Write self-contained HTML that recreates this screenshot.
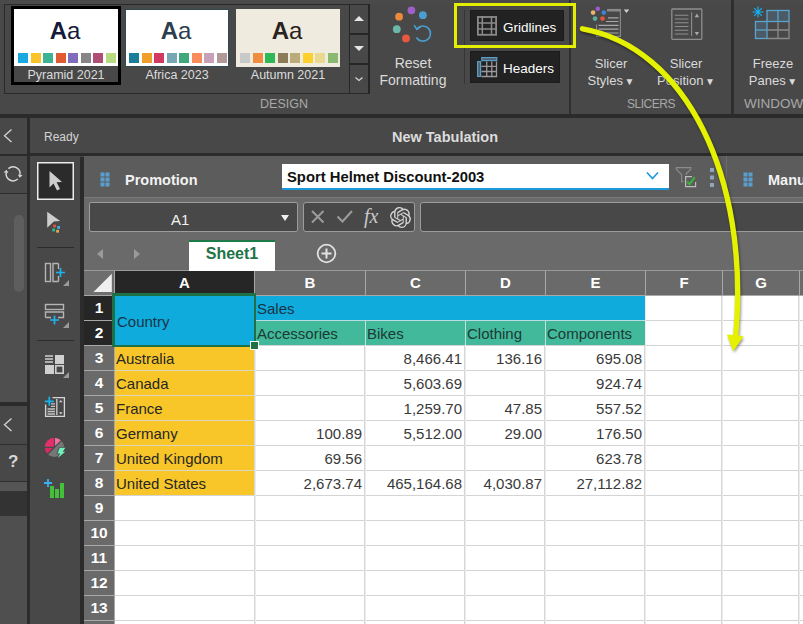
<!DOCTYPE html>
<html><head><meta charset="utf-8">
<style>
*{margin:0;padding:0;box-sizing:border-box}
html,body{width:803px;height:624px;overflow:hidden;background:#484848;font-family:"Liberation Sans",sans-serif;position:relative}
.a{position:absolute}
.lbl{color:#dcdcdc;font-size:12.5px;white-space:nowrap;text-align:center}
.grp{color:#a8a8a8;font-size:13px;white-space:nowrap}
.card{position:absolute;background:#fff}
.aa{position:absolute;left:-2px;right:0;top:10px;text-align:center;font-size:24px;line-height:24px}
.aa b{font-weight:bold}
.sw{position:absolute;top:44px;width:10px;height:10px}
.rib-t{color:#dadada;font-size:13px;white-space:nowrap;text-align:center;line-height:17px;padding-top:1px}
.cell{position:absolute;font-size:15px;line-height:24px;padding-top:1px;white-space:nowrap;color:#262626}
.num{text-align:right}
.rh{position:absolute;left:84px;width:30px;height:24px;color:#fff;font-weight:bold;font-size:15.5px;line-height:24px;text-align:center}
.ch{position:absolute;top:271px;height:24px;color:#fff;font-weight:bold;font-size:15px;line-height:24px;text-align:center}
</style></head><body>
<!-- ============ RIBBON ============ -->
<div class="a" style="left:0;top:0;width:803px;height:4px;background:#4a4a4a"></div>
<!-- design group frame -->
<div class="a" style="left:4px;top:4px;width:365px;height:90px;border:1px solid #2a2a2a"></div>

<!-- card1 selected -->
<div class="a" style="left:11px;top:6px;width:110px;height:79px;border:3px solid #000;background:#484848"></div>
<div class="card" style="left:14px;top:9px;width:104px;height:57px">
 <div class="aa" style="color:#161a3a"><b>A</b>a</div>
 <div class="sw" style="left:4px;background:#1aa8e0"></div>
 <div class="sw" style="left:16.5px;background:#f8c42a"></div>
 <div class="sw" style="left:29px;background:#3fb294"></div>
 <div class="sw" style="left:41.5px;background:#e25a32"></div>
 <div class="sw" style="left:54px;background:#7f6cbc"></div>
 <div class="sw" style="left:66.5px;background:#868686"></div>
 <div class="sw" style="left:79px;background:#b04e76"></div>
 <div class="sw" style="left:91.5px;background:#b8da80"></div>
</div>
<div class="a lbl" style="left:14px;top:67px;width:104px;line-height:16px">Pyramid 2021</div>
<!-- card2 -->
<div class="card" style="left:125px;top:9px;width:104px;height:58px;border:1px solid #2e4a52">
 <div class="aa" style="color:#2c3e4e;top:9px"><b>A</b>a</div>
 <div class="sw" style="left:3px;top:43px;background:#1a7e98"></div>
 <div class="sw" style="left:15.5px;top:43px;background:#f0a02a"></div>
 <div class="sw" style="left:28px;top:43px;background:#d23a62"></div>
 <div class="sw" style="left:40.5px;top:43px;background:#78a8b6"></div>
 <div class="sw" style="left:53px;top:43px;background:#40a87a"></div>
 <div class="sw" style="left:65.5px;top:43px;background:#f98c5a"></div>
 <div class="sw" style="left:78px;top:43px;background:#c8a0b8"></div>
 <div class="sw" style="left:90.5px;top:43px;background:#b09a98"></div>
</div>
<div class="a lbl" style="left:125px;top:67px;width:104px;line-height:16px">Africa 2023</div>
<!-- card3 -->
<div class="card" style="left:236px;top:9px;width:104px;height:58px;background:#efebdf;border:1px solid #efebdf">
 <div class="aa" style="color:#2a221e;top:9px"><b>A</b>a</div>
 <div class="sw" style="left:3px;top:43px;background:#c9c9c9"></div>
 <div class="sw" style="left:15.5px;top:43px;background:#f08c40"></div>
 <div class="sw" style="left:28px;top:43px;background:#2fb858"></div>
 <div class="sw" style="left:40.5px;top:43px;background:#8c7a58"></div>
 <div class="sw" style="left:53px;top:43px;background:#baab78"></div>
 <div class="sw" style="left:65.5px;top:43px;background:#ffd02c"></div>
 <div class="sw" style="left:78px;top:43px;background:#e8d890"></div>
 <div class="sw" style="left:90.5px;top:43px;background:#88ba70"></div>
</div>
<div class="a lbl" style="left:236px;top:67px;width:104px;line-height:16px">Autumn 2021</div>
<!-- scroll buttons -->
<div class="a" style="left:349px;top:4px;width:21px;height:90px;border-left:1px solid #262626;border-right:2px solid #262626"></div>
<div class="a" style="left:349px;top:33px;width:20px;height:2px;background:#262626"></div>
<div class="a" style="left:349px;top:63px;width:20px;height:2px;background:#262626"></div>
<div class="a" style="left:354px;top:16px;width:0;height:0;border-left:5px solid transparent;border-right:5px solid transparent;border-bottom:5px solid #e6e6e6"></div>
<div class="a" style="left:354px;top:46px;width:0;height:0;border-left:5px solid transparent;border-right:5px solid transparent;border-top:5px solid #e6e6e6"></div>
<svg class="a" style="left:354px;top:76px" width="10" height="6"><path d="M1.5 1.5 L5 4.5 L8.5 1.5" fill="none" stroke="#d8d8d8" stroke-width="1.2"/></svg>
<div class="a grp" style="left:244px;top:96px;width:80px;text-align:center;font-size:12.5px;line-height:16px">DESIGN</div>

<!-- reset formatting -->
<svg class="a" style="left:385px;top:0px" width="50" height="50">
 <circle cx="26.4" cy="10.3" r="3.9" fill="#a05ec8"/>
 <circle cx="37.9" cy="15.2" r="3.9" fill="#4a9ed0"/>
 <circle cx="14.1" cy="16.7" r="3.9" fill="#ec8a3c"/>
 <circle cx="11.8" cy="29.2" r="3.9" fill="#6cb8a8"/>
 <circle cx="21" cy="38.4" r="3.9" fill="#e8583e"/>
 <path d="M32.2 28.5 A7.6 7.6 0 1 1 31.4 37.5" fill="none" stroke="#4a9ed0" stroke-width="1.6"/>
 <path d="M29.2 25.2 L31.8 29.4 L35.8 26.6" fill="none" stroke="#4a9ed0" stroke-width="1.6" stroke-linejoin="miter"/>
</svg>
<div class="a rib-t" style="left:363px;top:54px;width:100px;font-size:14px">Reset<br>Formatting</div>
<!-- group separator -->
<div class="a" style="left:464px;top:10px;width:1px;height:74px;background:#353535"></div>
<div class="a" style="left:569px;top:0;width:2px;height:114px;background:#2e2e2e"></div>
<!-- gridlines btn -->
<div class="a" style="left:470px;top:10px;width:94px;height:31px;background:#222;border:1px solid #1c1c1c"></div>
<svg class="a" style="left:470px;top:8px" width="32" height="32">
 <rect x="7.9" y="9" width="18.2" height="17.8" fill="none" stroke="#8a8a8a" stroke-width="1.8"/>
 <path d="M7 15H27M7 21H27" stroke="#8a8a8a" stroke-width="1.7"/>
 <path d="M12.3 8V27M21.5 8V27" stroke="#8a8a8a" stroke-width="1.5"/>
</svg>
<div class="a" style="left:503px;top:19.5px;color:#fff;font-size:13.5px;line-height:16px;white-space:nowrap">Gridlines</div>
<!-- headers btn -->
<div class="a" style="left:470px;top:51px;width:90px;height:32px;background:#222;border:1px solid #1c1c1c"></div>
<svg class="a" style="left:470px;top:50px" width="32" height="32">
 <rect x="11.8" y="7.6" width="15" height="3" fill="#4e6272" stroke="#5a9ec6" stroke-width="1.2"/>
 <rect x="7.6" y="11.6" width="3" height="14.8" fill="#4e6272" stroke="#5a9ec6" stroke-width="1.2"/>
 <path d="M11.5 16.3H26.5M11.5 21.5H26.5M11.5 26.5H27.2M16.7 11.5V27M21.8 11.5V27M26.5 11.5V27" stroke="#9a9a9a" stroke-width="1.3"/>
</svg>
<div class="a" style="left:503px;top:61px;color:#fff;font-size:13.5px;line-height:16px;white-space:nowrap">Headers</div>
<!-- yellow highlight box -->
<div class="a" style="left:454px;top:3px;width:122px;height:45px;border:3.5px solid #e4ee00"></div>
<!-- slicer styles icon -->
<svg class="a" style="left:585px;top:0px" width="50" height="45">
 <circle cx="12.8" cy="8.8" r="2.3" fill="#9b5ccb"/>
 <circle cx="8.1" cy="12.6" r="2.3" fill="#f0b070"/>
 <circle cx="18.8" cy="12.6" r="2.3" fill="#3a86d4"/>
 <circle cx="10" cy="18.6" r="2.3" fill="#5fae9a"/>
 <circle cx="17.5" cy="18.6" r="2.3" fill="#e05636"/>
 <path d="M22 10.2H35.5" stroke="#8a8a8a" stroke-width="2.6"/>
 <path d="M35.4 9V36.4H11.5V24.5" fill="none" stroke="#8a8a8a" stroke-width="1.1"/>
 <path d="M23 17.9H33.5M21 21.5H33.5M13.5 25.4H33.5M13.5 29.2H33.5M13.5 33H33.5" stroke="#a8a8a8" stroke-width="1.2"/>
 <path d="M38.8 9.6H44.2L41.5 13Z" fill="#d0d0d0"/>
</svg>
<div class="a rib-t" style="left:571px;top:54px;width:80px">Slicer<br>Styles <span style="font-size:10px;margin-left:-2px">&#9660;</span></div>
<!-- slicer position icon -->
<svg class="a" style="left:660px;top:0px" width="50" height="50">
 <rect x="11.8" y="9" width="30" height="30.4" rx="0.8" fill="none" stroke="#8e8e8e" stroke-width="1.3"/>
 <path d="M14.8 15.2H28.4M14.8 19H28.4M14.8 22.8H28.4M14.8 26.5H28.4M14.8 30.3H28.4M14.8 34H28.4" stroke="#8e8e8e" stroke-width="1.1"/>
 <path d="M31.6 12.2V36" stroke="#8e8e8e" stroke-width="1.1"/>
 <path d="M34.7 17.2L36.9 13.6L39.1 17.2Z M34.7 32L36.9 35.6L39.1 32Z" fill="#a8a8a8"/>
</svg>
<div class="a rib-t" style="left:646px;top:54px;width:80px">Slicer<br>Position <span style="font-size:10px;margin-left:-2px">&#9660;</span></div>
<div class="a grp" style="left:611px;top:96px;width:80px;text-align:center;font-size:12px;letter-spacing:-0.5px;line-height:16px">SLICERS</div>
<div class="a" style="left:731px;top:0;width:3px;height:114px;background:#2e2e2e"></div>
<!-- freeze panes icon -->
<svg class="a" style="left:752px;top:5px" width="40" height="36">
 <rect x="15" y="5.5" width="22" height="11" fill="#4c5a65" stroke="#5aa4cf" stroke-width="1.3"/>
 <path d="M26 5.5V16.5" stroke="#5aa4cf" stroke-width="1.3"/>
 <rect x="3.5" y="16.5" width="11.5" height="17" fill="#4c5a65" stroke="#5aa4cf" stroke-width="1.3"/>
 <path d="M3.5 25H15" stroke="#5aa4cf" stroke-width="1.3"/>
 <path d="M15 33.5H37V16.5M26 16.5V33.5M15 25H37" fill="none" stroke="#8a8a8a" stroke-width="1.3"/>
 <path d="M6 1.5V12.5M0.5 7H11.5M2.2 3.2L9.8 10.8M9.8 3.2L2.2 10.8" stroke="#14b0f2" stroke-width="1.2"/>
</svg>
<div class="a rib-t" style="left:733px;top:54px;width:80px">Freeze<br>Panes <span style="font-size:10px;margin-left:-2px">&#9660;</span></div>
<div class="a grp" style="left:744px;top:96px;font-size:13.5px;line-height:16px">WINDOW</div>
<!-- dark band -->
<div class="a" style="left:0;top:114px;width:803px;height:4px;background:#2b2b2b"></div>

<!-- ============ TITLE ROW ============ -->
<div class="a" style="left:27px;top:118px;width:3px;height:506px;background:#2b2b2b"></div>
<svg class="a" style="left:2px;top:128px" width="12" height="16"><path d="M9.5 1.5 L2.5 7.8 L9.5 14" fill="none" stroke="#d4d4d4" stroke-width="1.3"/></svg>
<div class="a" style="left:44px;top:129px;color:#d4d4d4;font-size:12px;line-height:16px">Ready</div>
<div class="a" style="left:392px;top:128px;color:#dcdcdc;font-size:14.5px;font-weight:bold;line-height:18px;white-space:nowrap">New Tabulation</div>
<div class="a" style="left:27px;top:153px;width:776px;height:3px;background:#2b2b2b"></div>
<div class="a" style="left:0;top:154px;width:27px;height:2px;background:#2b2b2b"></div>
<!-- left panel -->
<div class="a" style="left:0;top:156px;width:27px;height:37px;background:#484848"></div>
<svg class="a" style="left:0px;top:158px" width="27" height="34">
 <path d="M8.42 10.60 A7.0 7.0 0 0 1 20.03 16.77" fill="none" stroke="#d8d8d8" stroke-width="1.5"/>
 <path d="M19.60 19.86 L22.61 17.14 L17.97 16.48Z" fill="#d8d8d8"/>
 <path d="M17.78 21.00 A7.0 7.0 0 0 1 6.17 14.83" fill="none" stroke="#d8d8d8" stroke-width="1.5"/>
 <path d="M6.60 11.74 L3.59 14.46 L8.23 15.12Z" fill="#d8d8d8"/>
</svg>
<div class="a" style="left:0;top:193px;width:27px;height:1px;background:#2b2b2b"></div>
<div class="a" style="left:0;top:194px;width:27px;height:208px;background:#4f4f4f"></div>
<div class="a" style="left:14px;top:215px;width:10px;height:77px;background:#5e5e5e;border-radius:5px"></div>
<div class="a" style="left:0;top:402px;width:27px;height:4px;background:#2b2b2b"></div>
<div class="a" style="left:0;top:406px;width:27px;height:38px;background:#484848"></div>
<svg class="a" style="left:2px;top:417px" width="12" height="16"><path d="M9.5 1.5 L2.5 7.8 L9.5 14" fill="none" stroke="#d4d4d4" stroke-width="1.3"/></svg>
<div class="a" style="left:0;top:444px;width:27px;height:1px;background:#2e2e2e"></div>
<div class="a" style="left:0;top:445px;width:27px;height:36px;background:#484848"></div>
<div class="a" style="left:8px;top:452px;color:#d8d8d8;font-size:17px;font-weight:bold;line-height:20px">?</div>
<div class="a" style="left:0;top:481px;width:27px;height:1px;background:#2e2e2e"></div>
<div class="a" style="left:0;top:482px;width:27px;height:9px;background:#555"></div>
<div class="a" style="left:0;top:491px;width:27px;height:25px;background:#333"></div>
<div class="a" style="left:0;top:516px;width:27px;height:108px;background:#4f4f4f"></div>
<!-- tool column -->
<div class="a" style="left:80px;top:157px;width:4px;height:467px;background:#2b2b2b"></div>
<svg class="a" style="left:37px;top:162px" width="37" height="38"><rect x="0.75" y="0.75" width="35.5" height="36.5" fill="#2b2b2b" stroke="#ececec" stroke-width="1.5"/></svg>
<svg class="a" style="left:46px;top:169px" width="20" height="26"><path d="M3.5 2 L3.5 18.5 L7.5 14.5 L11 21.5 L14 20 L10.6 13.2 L16 13 Z" fill="#cdcdcd"/></svg>
<svg class="a" style="left:44px;top:209px" width="22" height="24">
 <path d="M3.2 2.8 L16.2 12 L9.8 12.4 L3.2 18.8 Z" fill="#cdcdcd"/>
 <rect x="9.2" y="15.6" width="2.8" height="2.8" fill="#e8503c"/>
 <rect x="13.2" y="17" width="2.8" height="2.8" fill="#3ab0ee"/>
 <rect x="8.2" y="19.6" width="2.8" height="2.8" fill="#22c08a"/>
 <rect x="12.2" y="20.8" width="2.8" height="2.8" fill="#e4a458"/>
</svg>
<div class="a" style="left:37px;top:247px;width:37px;height:1px;background:#2b2b2b"></div>
<svg class="a" style="left:43px;top:261px" width="28" height="26">
 <rect x="2.5" y="2.5" width="5" height="18" fill="none" stroke="#b4b4b4" stroke-width="1.4"/>
 <path d="M15.5 2.5 H10 V20.5 H15.5 M15.5 2.5 V8 M15.5 15 V20.5" fill="none" stroke="#b4b4b4" stroke-width="1.4"/>
 <path d="M17.5 7 V16 M13 11.5 H22" stroke="#1eb4f0" stroke-width="1.7"/>
 <path d="M20 25 L26 19 L26 25Z" fill="#9a9a9a"/>
</svg>
<svg class="a" style="left:43px;top:302px" width="28" height="27">
 <rect x="2.5" y="2.5" width="18" height="5" fill="none" stroke="#b4b4b4" stroke-width="1.4"/>
 <path d="M2.5 15.5 V10 H20.5 V15.5 H15 M2.5 15.5 H8" fill="none" stroke="#b4b4b4" stroke-width="1.4"/>
 <path d="M11.5 13.5 V22.5 M7 18 H16" stroke="#1eb4f0" stroke-width="1.7"/>
 <path d="M20 26 L26 20 L26 26Z" fill="#9a9a9a"/>
</svg>
<div class="a" style="left:37px;top:340px;width:37px;height:1px;background:#2b2b2b"></div>
<svg class="a" style="left:43px;top:353px" width="28" height="27">
 <path d="M2 3H10M2 6H10M2 9H10" stroke="#d0d0d0" stroke-width="1.6"/>
 <rect x="12" y="2" width="9" height="9" fill="#d0d0d0"/>
 <rect x="2" y="12" width="9" height="9" fill="#d0d0d0"/>
 <rect x="12.8" y="12.8" width="7.4" height="7.4" fill="none" stroke="#d0d0d0" stroke-width="1.6"/>
 <path d="M20 25 L26 19 L26 25Z" fill="#9a9a9a"/>
</svg>
<svg class="a" style="left:28px;top:380px" width="56" height="45">
 <path d="M24.5 17.6 H36.4 V36.4 H17.6 V24.5" fill="none" stroke="#d6d6d6" stroke-width="1.3"/>
 <path d="M28.8 19 V35" stroke="#b8b8b8" stroke-width="1.6"/>
 <path d="M23 23.8H27M23 26.3H27M19.5 29H27M19.5 31.5H27M19.5 34H27" stroke="#c4c4c4" stroke-width="1.3"/>
 <path d="M31 22.2L32.8 20L34.6 22.2Z M31 32.2L32.8 34.4L34.6 32.2Z" fill="#d0d0d0"/>
 <path d="M21.3 16.8 V25.8 M16.8 21.3 H25.8" stroke="#16b2f2" stroke-width="1.7"/>
</svg>
<svg class="a" style="left:40px;top:432px" width="32" height="30">
 <path d="M14.4 15.4 L4.8 15.4 A9.6 9.6 0 0 1 14.4 5.8 Z" fill="#e2306a"/>
 <path d="M14.4 15.4 L14.4 5.8 A9.6 9.6 0 0 1 21.19 8.61 Z" fill="#ef6fa0"/>
 <path d="M14.4 15.4 L21.19 8.61 A9.6 9.6 0 0 1 7.61 22.19 Z" fill="#767676"/>
 <path d="M14.4 15.4 L7.61 22.19 A9.6 9.6 0 0 1 4.8 15.4 Z" fill="#d82a62"/>
 <path d="M14.4 15.4 V5 M14.4 15.4 H4 M22 7.8 L6.8 23" stroke="#484848" stroke-width="1.1"/>
 <path d="M19.8 15.8 H25.4 L22.6 19.8 H25.2 L17.8 26 L20.2 21.4 H17.4 Z" fill="#72f0bc" stroke="#484848" stroke-width="1.6" stroke-linejoin="round" paint-order="stroke"/>
</svg>
<svg class="a" style="left:44px;top:478px" width="24" height="22">
 <rect x="6" y="8" width="4" height="12" fill="#44c03a"/>
 <rect x="11" y="11" width="4" height="9" fill="#44c03a"/>
 <rect x="16" y="5" width="4" height="15" fill="#44c03a"/>
 <path d="M4 1 V9 M0 5 H8" stroke="#3ab0f0" stroke-width="1.8"/>
</svg>

<!-- ============ MAIN AREA ============ -->
<div class="a" style="left:84px;top:156px;width:719px;height:41px;background:#5c5c5c"></div>
<svg class="a" style="left:100px;top:172px" width="11" height="15">
 <rect x="0.5" y="0.5" width="4" height="4" fill="#5a9ed0"/><rect x="5.5" y="0.5" width="4" height="4" fill="#5a9ed0"/>
 <rect x="0.5" y="5.5" width="4" height="4" fill="#5a9ed0"/><rect x="5.5" y="5.5" width="4" height="4" fill="#5a9ed0"/>
 <rect x="0.5" y="10.5" width="4" height="4" fill="#5a9ed0"/><rect x="5.5" y="10.5" width="4" height="4" fill="#5a9ed0"/>
</svg>
<div class="a" style="left:125px;top:171px;color:#f2f2f2;font-size:14.5px;font-weight:bold;line-height:18px">Promotion</div>
<div class="a" style="left:282px;top:164px;width:387px;height:26px;background:#fff;border-bottom:2px solid #1a9ad8"></div>
<div class="a" style="left:287px;top:168px;color:#111;font-size:14.8px;font-weight:bold;line-height:18px;white-space:nowrap">Sport Helmet Discount-2003</div>
<svg class="a" style="left:646px;top:171px" width="14" height="10"><path d="M1 1.5 L6.5 7.5 L12 1.5" fill="none" stroke="#1a9ad8" stroke-width="1.6"/></svg>
<svg class="a" style="left:670px;top:160px" width="30" height="30">
 <path d="M15.6 14.5 L20.8 9.2 V7.6 H6.3 V9.2 L11.6 14.5 V21.8 H13.6" fill="none" stroke="#8c8c8c" stroke-width="1.1"/>
 <path d="M22 16.6 H15.6 V26.6 H25.6 V22" fill="none" stroke="#bdbdbd" stroke-width="1.2"/>
 <path d="M17.2 21.8 L19.6 24.2 L24.8 17.2" fill="none" stroke="#38b53a" stroke-width="2"/>
</svg>
<svg class="a" style="left:709px;top:167px" width="6" height="21"><rect x="1" y="1" width="4" height="4" fill="#8ea6ba"/><rect x="1" y="8.5" width="4" height="4" fill="#8ea6ba"/><rect x="1" y="16" width="4" height="4" fill="#8ea6ba"/></svg>
<div class="a" style="left:726px;top:156px;width:1px;height:41px;background:#6c6c6c"></div>
<svg class="a" style="left:743px;top:172px" width="11" height="15">
 <rect x="0.5" y="0.5" width="4" height="4" fill="#5a9ed0"/><rect x="5.5" y="0.5" width="4" height="4" fill="#5a9ed0"/>
 <rect x="0.5" y="5.5" width="4" height="4" fill="#5a9ed0"/><rect x="5.5" y="5.5" width="4" height="4" fill="#5a9ed0"/>
 <rect x="0.5" y="10.5" width="4" height="4" fill="#5a9ed0"/><rect x="5.5" y="10.5" width="4" height="4" fill="#5a9ed0"/>
</svg>
<div class="a" style="left:768px;top:171px;color:#f2f2f2;font-size:14.5px;font-weight:bold;line-height:18px">Manu</div>
<!-- formula bar -->
<div class="a" style="left:84px;top:197px;width:719px;height:1px;background:#7a7a7a"></div>
<div class="a" style="left:84px;top:198px;width:719px;height:72px;background:#6a6a6a"></div>
<div class="a" style="left:89px;top:202px;width:209px;height:30px;background:#484848;border:1px solid #9c9c9c;border-radius:2px"></div>
<div class="a" style="left:171px;top:209.5px;color:#f0f0f0;font-size:15px;line-height:20px">A1</div>
<div class="a" style="left:281px;top:215px;width:0;height:0;border-left:4.5px solid transparent;border-right:4.5px solid transparent;border-top:6px solid #f0f0f0"></div>
<div class="a" style="left:303px;top:202px;width:112px;height:30px;background:#484848;border:1px solid #9c9c9c;border-radius:3px"></div>
<svg class="a" style="left:310px;top:209px" width="16" height="16"><path d="M2 2 L13.5 13.5 M13.5 2 L2 13.5" stroke="#9c9c9c" stroke-width="2"/></svg>
<svg class="a" style="left:336px;top:208px" width="18" height="16"><path d="M1.5 8.5 L6.5 13.5 L16 3" fill="none" stroke="#9c9c9c" stroke-width="2"/></svg>
<div class="a" style="left:364px;top:205px;color:#c8c8c8;font-family:'Liberation Serif',serif;font-style:italic;font-size:20px;line-height:22px">fx</div>
<svg class="a" style="left:389.5px;top:206.5px" width="21" height="21" viewBox="0 0 24 24"><path fill="#d4d4d4" d="M22.2819 9.8211a5.9847 5.9847 0 0 0-.5157-4.9108 6.0462 6.0462 0 0 0-6.5098-2.9A6.0651 6.0651 0 0 0 4.9807 4.1818a5.9847 5.9847 0 0 0-3.9977 2.9 6.0462 6.0462 0 0 0 .7427 7.0966 5.98 5.98 0 0 0 .511 4.9107 6.051 6.051 0 0 0 6.5146 2.9001A5.9847 5.9847 0 0 0 13.2599 24a6.0557 6.0557 0 0 0 5.7718-4.2058 5.9894 5.9894 0 0 0 3.9977-2.9001 6.0557 6.0557 0 0 0-.7475-7.0729zm-9.022 12.6081a4.4755 4.4755 0 0 1-2.8764-1.0408l.1419-.0804 4.7783-2.7582a.7948.7948 0 0 0 .3927-.6813v-6.7369l2.02 1.1686a.071.071 0 0 1 .038.052v5.5826a4.504 4.504 0 0 1-4.4945 4.4944zm-9.6607-4.1254a4.4708 4.4708 0 0 1-.5346-3.0137l.142.0852 4.783 2.7582a.7712.7712 0 0 0 .7806 0l5.8428-3.3685v2.3324a.0804.0804 0 0 1-.0332.0615L9.74 19.9502a4.4992 4.4992 0 0 1-6.1408-1.6464zM2.3408 7.8956a4.485 4.485 0 0 1 2.3655-1.9728V11.6a.7664.7664 0 0 0 .3879.6765l5.8144 3.3543-2.0201 1.1685a.0757.0757 0 0 1-.071 0l-4.8303-2.7865A4.504 4.504 0 0 1 2.3408 7.872zm16.5963 3.8558L13.1038 8.364 15.1192 7.2a.0757.0757 0 0 1 .071 0l4.8303 2.7913a4.4944 4.4944 0 0 1-.6765 8.1042v-5.6772a.79.79 0 0 0-.407-.667zm2.0107-3.0231l-.142-.0852-4.7735-2.7818a.7759.7759 0 0 0-.7854 0L9.409 9.2297V6.8974a.0662.0662 0 0 1 .0284-.0615l4.8303-2.7866a4.4992 4.4992 0 0 1 6.6802 4.66zM8.3065 12.863l-2.02-1.1638a.0804.0804 0 0 1-.038-.0567V6.0742a4.4992 4.4992 0 0 1 7.3757-3.4537l-.142.0805L8.704 5.459a.7948.7948 0 0 0-.3927.6813zm1.0976-2.3654l2.602-1.4998 2.6069 1.4998v2.9994l-2.5974 1.4997-2.6067-1.4997Z"/></svg>
<div class="a" style="left:420px;top:202px;width:400px;height:30px;background:#484848;border:1px solid #9c9c9c;border-radius:3px"></div>
<!-- tab bar -->
<div class="a" style="left:97px;top:249px;width:0;height:0;border-top:5px solid transparent;border-bottom:5px solid transparent;border-right:6px solid #9a9a9a"></div>
<div class="a" style="left:134px;top:249px;width:0;height:0;border-top:5px solid transparent;border-bottom:5px solid transparent;border-left:6px solid #9a9a9a"></div>
<div class="a" style="left:189px;top:240px;width:86px;height:31px;background:#fff;border-top:2px solid #1e7a48"></div>
<div class="a" style="left:189px;top:244px;width:86px;text-align:center;color:#217346;font-size:16px;font-weight:bold;line-height:20px">Sheet1</div>
<svg class="a" style="left:316px;top:243px" width="21" height="21"><circle cx="10.5" cy="10.5" r="8.8" fill="none" stroke="#e2e2e2" stroke-width="1.8"/><path d="M10.5 5.5V15.5M5.5 10.5H15.5" stroke="#e2e2e2" stroke-width="2"/></svg>

<!-- GRID -->
<div class="a" style="left:84px;top:270px;width:105px;height:1px;background:#9a9a9a"></div>
<div class="a" style="left:275px;top:270px;width:528px;height:1px;background:#9a9a9a"></div>
<div class="a" style="left:84px;top:271px;width:719px;height:24px;background:#6a6a6a"></div>
<div class="a" style="left:115px;top:271px;width:139px;height:24px;background:#262626"></div>
<div class="a" style="left:84px;top:271px;width:30px;height:24px;background:#6e6e6e"></div>
<svg class="a" style="left:93px;top:273px" width="20" height="20"><path d="M0.5 19 L18.8 0.8 L18.8 19Z" fill="#efefef"/></svg>
<div class="a" style="left:84px;top:295px;width:719px;height:1px;background:#a8a8a8"></div>
<div class="a" style="left:114px;top:271px;width:1px;height:24px;background:#a8a8a8"></div>
<div class="a" style="left:254px;top:271px;width:1px;height:24px;background:#a8a8a8"></div>
<div class="a" style="left:365px;top:271px;width:1px;height:24px;background:#a8a8a8"></div>
<div class="a" style="left:465px;top:271px;width:1px;height:24px;background:#a8a8a8"></div>
<div class="a" style="left:545px;top:271px;width:1px;height:24px;background:#a8a8a8"></div>
<div class="a" style="left:645px;top:271px;width:1px;height:24px;background:#a8a8a8"></div>
<div class="a" style="left:722px;top:271px;width:1px;height:24px;background:#a8a8a8"></div>
<div class="a" style="left:799px;top:271px;width:1px;height:24px;background:#a8a8a8"></div>
<div class="ch" style="left:115px;width:139px">A</div>
<div class="ch" style="left:255px;width:110px">B</div>
<div class="ch" style="left:366px;width:99px">C</div>
<div class="ch" style="left:466px;width:79px">D</div>
<div class="ch" style="left:546px;width:99px">E</div>
<div class="ch" style="left:646px;width:76px">F</div>
<div class="ch" style="left:723px;width:76px">G</div>
<div class="a" style="left:84px;top:296px;width:30px;height:328px;background:#6a6a6a"></div>
<div class="a" style="left:84px;top:296px;width:30px;height:49px;background:#262626"></div>
<div class="rh" style="top:296px">1</div>
<div class="a" style="left:84px;top:320px;width:30px;height:1px;background:#a8a8a8"></div>
<div class="rh" style="top:321px">2</div>
<div class="a" style="left:84px;top:345px;width:30px;height:1px;background:#a8a8a8"></div>
<div class="rh" style="top:346px">3</div>
<div class="a" style="left:84px;top:370px;width:30px;height:1px;background:#a8a8a8"></div>
<div class="rh" style="top:371px">4</div>
<div class="a" style="left:84px;top:395px;width:30px;height:1px;background:#a8a8a8"></div>
<div class="rh" style="top:396px">5</div>
<div class="a" style="left:84px;top:420px;width:30px;height:1px;background:#a8a8a8"></div>
<div class="rh" style="top:421px">6</div>
<div class="a" style="left:84px;top:445px;width:30px;height:1px;background:#a8a8a8"></div>
<div class="rh" style="top:446px">7</div>
<div class="a" style="left:84px;top:470px;width:30px;height:1px;background:#a8a8a8"></div>
<div class="rh" style="top:471px">8</div>
<div class="a" style="left:84px;top:495px;width:30px;height:1px;background:#a8a8a8"></div>
<div class="rh" style="top:496px">9</div>
<div class="a" style="left:84px;top:520px;width:30px;height:1px;background:#a8a8a8"></div>
<div class="rh" style="top:521px">10</div>
<div class="a" style="left:84px;top:545px;width:30px;height:1px;background:#a8a8a8"></div>
<div class="rh" style="top:546px">11</div>
<div class="a" style="left:84px;top:570px;width:30px;height:1px;background:#a8a8a8"></div>
<div class="rh" style="top:571px">12</div>
<div class="a" style="left:84px;top:595px;width:30px;height:1px;background:#a8a8a8"></div>
<div class="rh" style="top:596px">13</div>
<div class="a" style="left:84px;top:620px;width:30px;height:1px;background:#a8a8a8"></div>
<div class="rh" style="top:621px">14</div>
<div class="a" style="left:114px;top:296px;width:1px;height:328px;background:#a8a8a8"></div>
<div class="a" style="left:115px;top:296px;width:688px;height:328px;background:#fff"></div>
<div class="a" style="left:115px;top:320px;width:688px;height:1px;background:#d4d4d4"></div>
<div class="a" style="left:115px;top:345px;width:688px;height:1px;background:#d4d4d4"></div>
<div class="a" style="left:115px;top:370px;width:688px;height:1px;background:#d4d4d4"></div>
<div class="a" style="left:115px;top:395px;width:688px;height:1px;background:#d4d4d4"></div>
<div class="a" style="left:115px;top:420px;width:688px;height:1px;background:#d4d4d4"></div>
<div class="a" style="left:115px;top:445px;width:688px;height:1px;background:#d4d4d4"></div>
<div class="a" style="left:115px;top:470px;width:688px;height:1px;background:#d4d4d4"></div>
<div class="a" style="left:115px;top:495px;width:688px;height:1px;background:#d4d4d4"></div>
<div class="a" style="left:115px;top:520px;width:688px;height:1px;background:#d4d4d4"></div>
<div class="a" style="left:115px;top:545px;width:688px;height:1px;background:#d4d4d4"></div>
<div class="a" style="left:115px;top:570px;width:688px;height:1px;background:#d4d4d4"></div>
<div class="a" style="left:115px;top:595px;width:688px;height:1px;background:#d4d4d4"></div>
<div class="a" style="left:115px;top:620px;width:688px;height:1px;background:#d4d4d4"></div>
<div class="a" style="left:254px;top:296px;width:1px;height:328px;background:#d6d6d6"></div><div class="a" style="left:255px;top:296px;width:1px;height:328px;background:#ececec"></div>
<div class="a" style="left:364px;top:296px;width:1px;height:328px;background:#d6d6d6"></div><div class="a" style="left:365px;top:296px;width:1px;height:328px;background:#ececec"></div>
<div class="a" style="left:464px;top:296px;width:1px;height:328px;background:#d6d6d6"></div><div class="a" style="left:465px;top:296px;width:1px;height:328px;background:#ececec"></div>
<div class="a" style="left:544px;top:296px;width:1px;height:328px;background:#d6d6d6"></div><div class="a" style="left:545px;top:296px;width:1px;height:328px;background:#ececec"></div>
<div class="a" style="left:644px;top:296px;width:1px;height:328px;background:#d6d6d6"></div><div class="a" style="left:645px;top:296px;width:1px;height:328px;background:#ececec"></div>
<div class="a" style="left:721px;top:296px;width:1px;height:328px;background:#d6d6d6"></div><div class="a" style="left:722px;top:296px;width:1px;height:328px;background:#ececec"></div>
<div class="a" style="left:798px;top:296px;width:1px;height:328px;background:#d6d6d6"></div><div class="a" style="left:799px;top:296px;width:1px;height:328px;background:#ececec"></div>
<div class="a" style="left:115px;top:296px;width:139px;height:49px;background:#0fabdc"></div>
<div class="a" style="left:255px;top:296px;width:390px;height:24px;background:#0fabdc"></div>
<div class="a" style="left:255px;top:320px;width:390px;height:1px;background:#b8dde4"></div>
<div class="a" style="left:255px;top:321px;width:390px;height:24px;background:#42b99b"></div>
<div class="a" style="left:365px;top:321px;width:1px;height:24px;background:#bfe0d6"></div>
<div class="a" style="left:465px;top:321px;width:1px;height:24px;background:#bfe0d6"></div>
<div class="a" style="left:545px;top:321px;width:1px;height:24px;background:#bfe0d6"></div>
<div class="a" style="left:115px;top:346px;width:139px;height:149px;background:#f8c629"></div>
<div class="a" style="left:115px;top:370px;width:139px;height:1px;background:#dcd6c0"></div>
<div class="a" style="left:115px;top:395px;width:139px;height:1px;background:#dcd6c0"></div>
<div class="a" style="left:115px;top:420px;width:139px;height:1px;background:#dcd6c0"></div>
<div class="a" style="left:115px;top:445px;width:139px;height:1px;background:#dcd6c0"></div>
<div class="a" style="left:115px;top:470px;width:139px;height:1px;background:#dcd6c0"></div>
<div class="cell" style="left:117px;top:309px;color:#1b3444">Country</div>
<div class="cell" style="left:257px;top:296px;color:#1b3444">Sales</div>
<div class="cell" style="left:257px;top:321px;color:#1c3a34">Accessories</div>
<div class="cell" style="left:367px;top:321px;color:#1c3a34">Bikes</div>
<div class="cell" style="left:467px;top:321px;color:#1c3a34">Clothing</div>
<div class="cell" style="left:547px;top:321px;color:#1c3a34">Components</div>
<div class="cell" style="left:116px;top:346px">Australia</div>
<div class="cell" style="left:116px;top:371px">Canada</div>
<div class="cell" style="left:116px;top:396px">France</div>
<div class="cell" style="left:116px;top:421px">Germany</div>
<div class="cell" style="left:116px;top:446px">United Kingdom</div>
<div class="cell" style="left:116px;top:471px">United States</div>
<div class="cell num" style="right:341px;top:346px;color:#3a3a3a">8,466.41</div>
<div class="cell num" style="right:261px;top:346px;color:#3a3a3a">136.16</div>
<div class="cell num" style="right:161px;top:346px;color:#3a3a3a">695.08</div>
<div class="cell num" style="right:341px;top:371px;color:#3a3a3a">5,603.69</div>
<div class="cell num" style="right:161px;top:371px;color:#3a3a3a">924.74</div>
<div class="cell num" style="right:341px;top:396px;color:#3a3a3a">1,259.70</div>
<div class="cell num" style="right:261px;top:396px;color:#3a3a3a">47.85</div>
<div class="cell num" style="right:161px;top:396px;color:#3a3a3a">557.52</div>
<div class="cell num" style="right:441px;top:421px;color:#3a3a3a">100.89</div>
<div class="cell num" style="right:341px;top:421px;color:#3a3a3a">5,512.00</div>
<div class="cell num" style="right:261px;top:421px;color:#3a3a3a">29.00</div>
<div class="cell num" style="right:161px;top:421px;color:#3a3a3a">176.50</div>
<div class="cell num" style="right:441px;top:446px;color:#3a3a3a">69.56</div>
<div class="cell num" style="right:161px;top:446px;color:#3a3a3a">623.78</div>
<div class="cell num" style="right:441px;top:471px;color:#3a3a3a">2,673.74</div>
<div class="cell num" style="right:341px;top:471px;color:#3a3a3a">465,164.68</div>
<div class="cell num" style="right:261px;top:471px;color:#3a3a3a">4,030.87</div>
<div class="cell num" style="right:161px;top:471px;color:#3a3a3a">27,112.82</div>
<div class="a" style="left:112px;top:293px;width:144px;height:54px;border:2px solid #1e7145;border-left-width:3px;border-top-width:3px"></div>
<div class="a" style="left:250px;top:341px;width:9px;height:9px;background:#fff"></div>
<div class="a" style="left:251px;top:342px;width:7px;height:7px;background:#1e7145"></div>
<svg class="a" style="left:0;top:0;overflow:visible" width="803" height="624">
<defs><filter id="sh" x="-20%" y="-20%" width="140%" height="140%"><feGaussianBlur stdDeviation="1.5"/></filter></defs>
<g filter="url(#sh)" opacity="0.45" transform="translate(1,2)"><path d="M582.5 28.8 C684.6 46.8 750 175.5 735.7 336" fill="none" stroke="#000" stroke-width="5" stroke-linecap="round"/><path d="M727.5 335 L743 336.5 L733.3 350.5Z" fill="#000"/></g>
<path d="M582.5 28.8 C684.6 46.8 750 175.5 735.7 336" fill="none" stroke="#e4f100" stroke-width="5.4" stroke-linecap="round"/>
<path d="M727.5 335 L743 336.5 L733.3 350.5Z" fill="#e4f100" stroke="#e4f100" stroke-width="1" stroke-linejoin="round"/>
</svg>
</body></html>
